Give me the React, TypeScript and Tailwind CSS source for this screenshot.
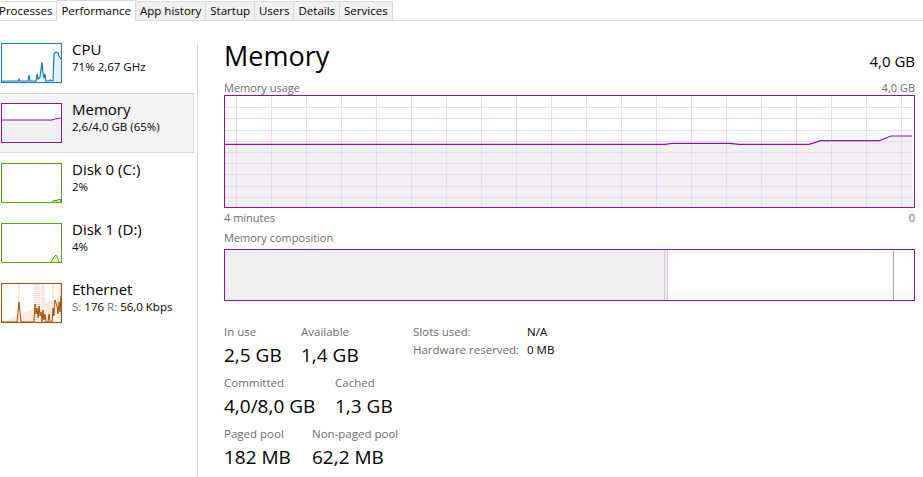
import React from 'react';

const font = { fontFamily: '"Open Sans", "Noto Sans", sans-serif' };

const tabs = ['Processes', 'Performance', 'App history', 'Startup', 'Users', 'Details', 'Services'];

function Tabs() {
  return (
    <div className="flex h-[21px] items-end border-b border-[#d9d9d9] pl-0">
      {tabs.map((t) =>
        t === 'Performance' ? (
          <div
            key={t}
            className="relative -mb-px flex h-[21px] items-start border-x border-t border-[#d9d9d9] bg-white px-[4px] pt-[1px] text-[11.5px] text-black"
          >
            {t}
          </div>
        ) : t === 'Processes' ? (
          <div key={t} className="-ml-[5px] flex h-[19px] items-center border-t border-[#d9d9d9] bg-white pl-[4px] pr-[4px] text-[11.5px] text-black">
            {t}
          </div>
        ) : (
          <div key={t} className="flex h-[19px] items-center border-r border-t border-[#d9d9d9] bg-[#f0f0f0] px-[4px] text-[11.5px] text-black">
            {t}
          </div>
        )
      )}
    </div>
  );
}

function Thumb({ color, fill, children }: { color: string; fill?: string; children: React.ReactNode }) {
  return (
    <div className="ml-[1px] h-[40px] w-[61px] border" style={{ borderColor: color, background: fill ?? 'white' }}>
      <svg width="59" height="38" viewBox="0 0 59 38" className="block">
        {children}
      </svg>
    </div>
  );
}

const cpuPts =
  '0,37 16,37 17,35 18,37 26,37 27,31 28,37 34,37 35,30 36,35 38,33 40,18 41,30 42,34 43,30 44,37 47,37 48,36 50,37 51,37 52,10 54,8 56,9 57,12 59,15';

function SideItem({
  name,
  sub,
  thumb,
  selected,
}: {
  name: string;
  sub: React.ReactNode;
  thumb: React.ReactNode;
  selected?: boolean;
}) {
  return (
    <div
      className={
        'flex h-[60px] items-start pt-[9px] ' +
        (selected ? 'border-y border-r border-[#dadada] bg-[#f3f3f3] pt-[8px]' : 'border-y border-transparent')
      }
    >
      {thumb}
      <div className="ml-[10px] -mt-[4px]">
        <div className="text-[15px] leading-[20px] text-black">{name}</div>
        <div className="text-[11.5px] leading-[16px] text-black">{sub}</div>
      </div>
    </div>
  );
}

function Sidebar() {
  return (
    <div className="mt-[22px] w-[198px] shrink-0 border-r border-[#dadada] pr-[3px]">
      <div className="-mt-[10px]" />
      <SideItem
        name="CPU"
        sub="71% 2,67 GHz"
        thumb={
          <Thumb color="#117dbb">
            <polygon points={cpuPts + ' 59,38 0,38'} fill="#e5f0f8" />
            <polyline points={cpuPts} fill="none" stroke="#117dbb" strokeWidth="1.2" />
          </Thumb>
        }
      />
      <SideItem
        selected
        name="Memory"
        sub="2,6/4,0 GB (65%)"
        thumb={
          <Thumb color="#8b12ae">
            <polygon points="0,16 50,16 53,15 59,14 59,38 0,38" fill="#f1eff2" />
            <polyline points="0,16 50,16 53,15 59,14" fill="none" stroke="#8b12ae" strokeWidth="1" />
          </Thumb>
        }
      />
      <SideItem
        name="Disk 0 (C:)"
        sub="2%"
        thumb={
          <Thumb color="#4da60c">
            <polyline points="50,38 52,36 53,37 54,36 55,37 56,35 57,36 58,35 59,36 59,38" fill="#cfe6bd" stroke="#4da60c" strokeWidth="1" />
          </Thumb>
        }
      />
      <SideItem
        name="Disk 1 (D:)"
        sub="4%"
        thumb={
          <Thumb color="#4da60c">
            <polyline points="49,38 52,33 54,31 56,35 57,38" fill="#e8f3e0" stroke="#4da60c" strokeWidth="1" />
          </Thumb>
        }
      />
      <SideItem
        name="Ethernet"
        sub={
          <>
            <span className="text-[#6c6c6c]">S:</span> 176 <span className="text-[#6c6c6c]">R:</span> 56,0 Kbps
          </>
        }
        thumb={
          <Thumb color="#a74f01">
            {[17, 33, 35, 37, 40, 42, 51, 58].map((x) => (
              <line key={x} x1={x} y1="0" x2={x} y2="38" stroke="#e7a27a" strokeWidth="0.8" strokeDasharray="1.2 1" />
            ))}
            <polyline
              points="0,38 15,38 17,18 19,38 32,38 33,20 34,30 35,24 36,34 37,22 38,32 39,28 40,38 41,26 42,36 43,30 44,38 46,38 47,30 48,38 50,38 51,24 52,32 53,16 55,22 56,30 57,18 58,28 59,12"
              fill="#fbece1"
              stroke="#a74f01"
              strokeWidth="1"
            />
          </Thumb>
        }
      />
    </div>
  );
}

const usagePts: [number, number][] = [
  [0, 48.3],
  [440, 48.3],
  [447, 47.3],
  [505, 47.3],
  [514, 48.3],
  [584, 48.3],
  [596, 44.7],
  [654, 44.7],
  [666, 40],
  [687, 40],
];

function UsageGraph() {
  const w = 687;
  const h = 111;
  const line = usagePts.map((p) => p.join(',')).join(' ');
  const verticals = Array.from({ length: 20 }, (_, i) => 11 + i * 35).filter((x) => x < w);
  const horizontals = Array.from({ length: 9 }, (_, i) => (i + 1) * 11.2);
  return (
    <div className="h-[113px] border border-[#8b12ae] bg-white">
      <svg width={w} height={h} viewBox={`0 0 ${w} ${h}`} className="block">
        <polygon points={`${line} ${w},${h} 0,${h}`} fill="#f2eff3" />
        {verticals.map((x) => (
          <line key={'v' + x} x1={x + 0.5} y1="0" x2={x + 0.5} y2={h} stroke="#ecd8f0" strokeWidth="1" />
        ))}
        {horizontals.map((y) => (
          <line key={'h' + y} x1="0" y1={Math.round(y) + 0.5} x2={w} y2={Math.round(y) + 0.5} stroke="#ecd8f0" strokeWidth="1" />
        ))}
        <polyline points={line} fill="none" stroke="#8b12ae" strokeWidth="1.2" />
      </svg>
    </div>
  );
}

function Stat({ label, value, className }: { label: string; value: string; className?: string }) {
  return (
    <div className={className}>
      <div className="text-[11.5px] leading-[16px] text-[#6d6d6d]">{label}</div>
      <div className="mt-[2px] text-[19px] leading-[26px] text-black">{value}</div>
    </div>
  );
}

export default function App() {
  return (
    <div className="h-[477px] w-[923px] overflow-hidden bg-white" style={font}>
      <Tabs />
      <div className="flex h-[456px]">
        <Sidebar />
        <div className="flex-1 pl-[26px] pr-[8px]">
          <div className="flex items-end justify-between pt-[17px]">
            <div className="text-[27px] leading-[36px] text-black">Memory</div>
            <div className="mb-[3px] text-[15px] leading-[20px] text-black">4,0 GB</div>
          </div>
          <div className="mt-[6px] flex justify-between text-[11px] leading-[15px] text-[#6d6d6d]">
            <span>Memory usage</span>
            <span>4,0 GB</span>
          </div>
          <UsageGraph />
          <div className="mt-[2px] flex justify-between text-[11px] leading-[15px] text-[#6d6d6d]">
            <span>4 minutes</span>
            <span>0</span>
          </div>
          <div className="mt-[5px] text-[11px] leading-[15px] text-[#6d6d6d]">Memory composition</div>
          <div className="mt-[4px] flex h-[52px] border border-[#8b12ae]">
            <div className="w-[439px] bg-[#f2eff3]" />
            <div className="w-[1px] bg-[#d9c3e0]" />
            <div className="w-[2px] bg-[#f2eff3]" />
            <div className="w-[1px] bg-[#d9c3e0]" />
            <div className="w-[225px] bg-white" />
            <div className="w-[1px] bg-[#c99ad6]" />
            <div className="flex-1 bg-white" />
          </div>
          <div className="mt-[23px] flex items-start">
            <div className="flex flex-col gap-[7px]">
              <div className="flex">
                <Stat label="In use" value="2,5 GB" className="w-[77px]" />
                <Stat label="Available" value="1,4 GB" className="w-[112px]" />
              </div>
              <div className="flex">
                <Stat label="Committed" value="4,0/8,0 GB" className="w-[111px]" />
                <Stat label="Cached" value="1,3 GB" />
              </div>
              <div className="flex">
                <Stat label="Paged pool" value="182 MB" className="w-[88px]" />
                <Stat label="Non-paged pool" value="62,2 MB" />
              </div>
            </div>
            <div className="grid grid-cols-[114px_auto] content-start gap-y-[2px] text-[11.5px] leading-[16px]">
              <span className="text-[#6d6d6d]">Slots used:</span>
              <span className="text-black">N/A</span>
              <span className="text-[#6d6d6d]">Hardware reserved:</span>
              <span className="text-black">0 MB</span>
            </div>
          </div>
        </div>
      </div>
    </div>
  );
}
